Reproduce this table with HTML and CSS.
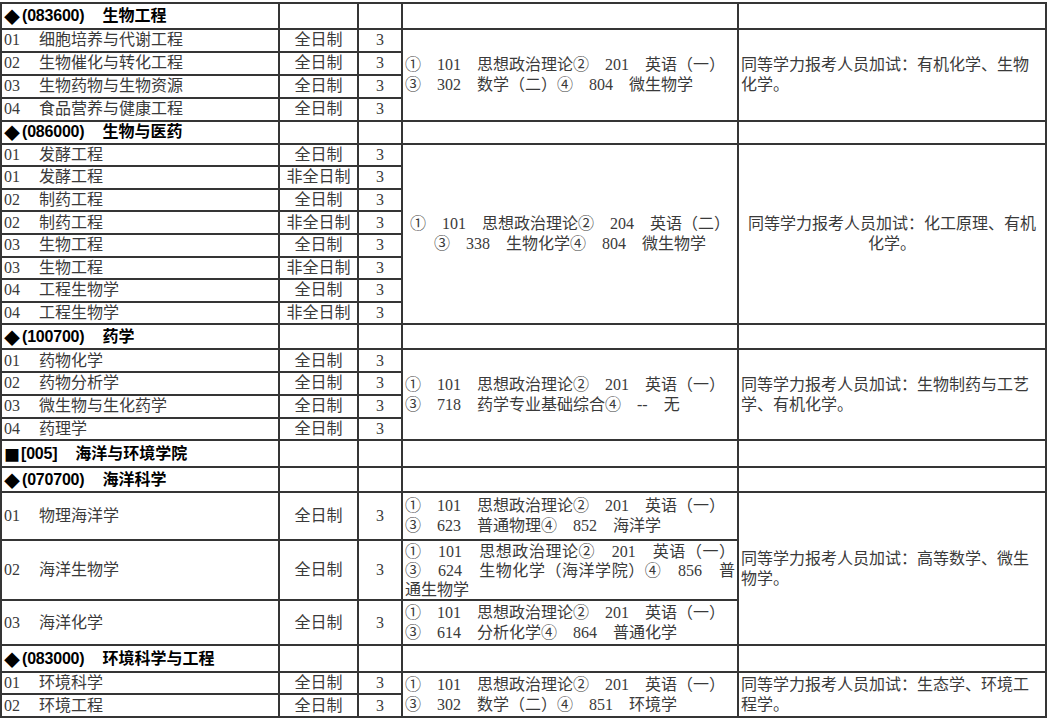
FILE: index.html
```html
<!DOCTYPE html>
<html lang="zh-CN">
<head>
<meta charset="utf-8">
<title>招生专业目录</title>
<link rel="stylesheet" href="styles.css">
</head>
<body>
<table class="plan">
<colgroup>
<col class="c-name"><col class="c-mode"><col class="c-yr"><col class="c-exam"><col class="c-note">
</colgroup>
<tbody>
<tr class="h26"><td class="hd"><span class="mk">◆</span><span class="code">(083600)</span><span class="hn">生物工程</span></td><td></td><td></td><td></td><td></td></tr>
<tr class="r"><td class="nm"><span class="no">01</span>细胞培养与代谢工程</td><td class="ct">全日制</td><td class="ct">3</td><td class="exam" rowspan="4">①　101　思想政治理论②　201　英语（一）③　302　数学（二）④　804　微生物学</td><td class="note" rowspan="4">同等学力报考人员加试：有机化学、生物化学。</td></tr>
<tr class="r"><td class="nm"><span class="no">02</span>生物催化与转化工程</td><td class="ct">全日制</td><td class="ct">3</td></tr>
<tr class="r"><td class="nm"><span class="no">03</span>生物药物与生物资源</td><td class="ct">全日制</td><td class="ct">3</td></tr>
<tr class="r"><td class="nm"><span class="no">04</span>食品营养与健康工程</td><td class="ct">全日制</td><td class="ct">3</td></tr>

<tr class="h23"><td class="hd"><span class="mk">◆</span><span class="code">(086000)</span><span class="hn">生物与医药</span></td><td></td><td></td><td></td><td></td></tr>
<tr class="r2"><td class="nm"><span class="no">01</span>发酵工程</td><td class="ct">全日制</td><td class="ct">3</td><td class="exam center" rowspan="8">①　101　思想政治理论②　204　英语（二）③　338　生物化学④　804　微生物学</td><td class="note center" rowspan="8">同等学力报考人员加试：化工原理、有机化学。</td></tr>
<tr class="r2"><td class="nm"><span class="no">01</span>发酵工程</td><td class="ct">非全日制</td><td class="ct">3</td></tr>
<tr class="r2"><td class="nm"><span class="no">02</span>制药工程</td><td class="ct">全日制</td><td class="ct">3</td></tr>
<tr class="r2"><td class="nm"><span class="no">02</span>制药工程</td><td class="ct">非全日制</td><td class="ct">3</td></tr>
<tr class="r2"><td class="nm"><span class="no">03</span>生物工程</td><td class="ct">全日制</td><td class="ct">3</td></tr>
<tr class="r2"><td class="nm"><span class="no">03</span>生物工程</td><td class="ct">非全日制</td><td class="ct">3</td></tr>
<tr class="r2"><td class="nm"><span class="no">04</span>工程生物学</td><td class="ct">全日制</td><td class="ct">3</td></tr>
<tr class="r2"><td class="nm"><span class="no">04</span>工程生物学</td><td class="ct">非全日制</td><td class="ct">3</td></tr>

<tr class="h25"><td class="hd"><span class="mk">◆</span><span class="code">(100700)</span><span class="hn">药学</span></td><td></td><td></td><td></td><td></td></tr>
<tr class="r3"><td class="nm"><span class="no">01</span>药物化学</td><td class="ct">全日制</td><td class="ct">3</td><td class="exam" rowspan="4">①　101　思想政治理论②　201　英语（一）③　718　药学专业基础综合④　--　无</td><td class="note" rowspan="4">同等学力报考人员加试：生物制药与工艺学、有机化学。</td></tr>
<tr class="r3"><td class="nm"><span class="no">02</span>药物分析学</td><td class="ct">全日制</td><td class="ct">3</td></tr>
<tr class="r3"><td class="nm"><span class="no">03</span>微生物与生化药学</td><td class="ct">全日制</td><td class="ct">3</td></tr>
<tr class="r3"><td class="nm"><span class="no">04</span>药理学</td><td class="ct">全日制</td><td class="ct">3</td></tr>

<tr class="h27"><td class="hd"><span class="mk sq">■</span><span class="code">[005]</span><span class="hn">海洋与环境学院</span></td><td></td><td></td><td></td><td></td></tr>
<tr class="h25"><td class="hd"><span class="mk">◆</span><span class="code">(070700)</span><span class="hn">海洋科学</span></td><td></td><td></td><td></td><td></td></tr>
<tr class="x48"><td class="nm"><span class="no">01</span>物理海洋学</td><td class="ct">全日制</td><td class="ct">3</td><td class="exam">①　101　思想政治理论②　201　英语（一）③　623　普通物理④　852　海洋学</td><td class="note" rowspan="3">同等学力报考人员加试：高等数学、微生物学。</td></tr>
<tr class="x60"><td class="nm"><span class="no">02</span>海洋生物学</td><td class="ct">全日制</td><td class="ct">3</td><td class="exam just">①　101　思想政治理论②　201　英语（一）③　624　生物化学（海洋学院）④　856　普通生物学</td></tr>
<tr class="x45"><td class="nm"><span class="no">03</span>海洋化学</td><td class="ct">全日制</td><td class="ct">3</td><td class="exam">①　101　思想政治理论②　201　英语（一）③　614　分析化学④　864　普通化学</td></tr>

<tr class="h27"><td class="hd"><span class="mk">◆</span><span class="code">(083000)</span><span class="hn">环境科学与工程</span></td><td></td><td></td><td></td><td></td></tr>
<tr class="r22"><td class="nm"><span class="no">01</span>环境科学</td><td class="ct">全日制</td><td class="ct">3</td><td class="exam" rowspan="2">①　101　思想政治理论②　201　英语（一）③　302　数学（二）④　851　环境学</td><td class="note" rowspan="2">同等学力报考人员加试：生态学、环境工程学。</td></tr>
<tr class="r23"><td class="nm"><span class="no">02</span>环境工程</td><td class="ct">全日制</td><td class="ct">3</td></tr>
</tbody>
</table>
</body>
</html>
```

FILE: styles.css
```css
html, body {
  margin: 0;
  padding: 0;
  background: #ffffff;
}

body {
  padding-top: 2px;
}

.plan {
  border-collapse: collapse;
  table-layout: fixed;
  width: 1045px;
  font-family: "Liberation Serif", "Noto Sans CJK SC", serif;
  font-size: 16px;
  line-height: 20px;
  color: #3a3a3a;
}

.c-name { width: 278px; }
.c-mode { width: 79px; }
.c-yr { width: 44px; }
.c-exam { width: 336px; }
.c-note { width: 308px; }

.plan td {
  border: 2px solid #353535;
  padding: 0 2px;
  vertical-align: middle;
  overflow: hidden;
}

.hd {
  font-family: "Liberation Sans", "Noto Sans CJK SC", sans-serif;
  font-weight: bold;
  color: #000;
  white-space: nowrap;
}

.hd .mk {
  display: inline-block;
  vertical-align: top;
  width: 18px;
  height: 20px;
  line-height: 20px;
  font-family: "Noto Sans CJK SC", sans-serif;
}

.hd .sq {
  width: 17px;
}

.hd .code {
  letter-spacing: -0.2px;
}

.hd .hn {
  margin-left: 18px;
}

.nm {
  white-space: nowrap;
  padding-left: 1px;
}

.nm .no {
  display: inline-block;
  width: 35px;
}

.ct {
  text-align: center;
  white-space: nowrap;
}

.exam {
  text-align: left;
}

.just {
  text-align: justify;
  text-align-last: left;
  line-height: 19px;
}

.note {
  text-align: left;
  padding-left: 3px;
}

.center {
  text-align: center;
  text-align-last: center;
}

.h23 { height: 23px; }
.h25 { height: 25px; }
.h26 { height: 26px; }
.h27 { height: 27px; }
.r { height: 22.9px; }
.r2 { height: 22.6px; }
.r3 { height: 22.75px; }
.r22 { height: 22px; }
.r23 { height: 23px; }
.x45 { height: 45px; }
.x48 { height: 48px; }
.x60 { height: 60px; }
```
